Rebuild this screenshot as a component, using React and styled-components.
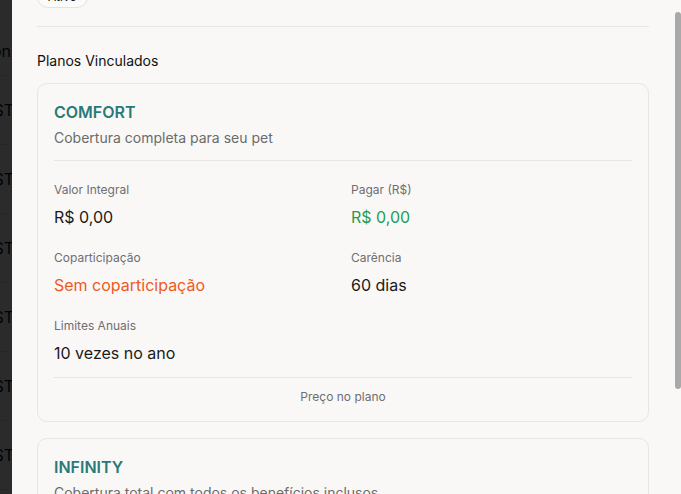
import { useEffect, useRef } from "react";
import styled, { createGlobalStyle } from "styled-components";

const Global = createGlobalStyle`
  html, body { margin: 0; padding: 0; height: 100%; }
  body {
    font-family: Inter, "Noto Sans", "Liberation Sans", sans-serif;
    background: #ffffff;
    color: #1a1a1a;
    overflow: hidden;
  }
`;

const Page = styled.div`
  height: 494px;
  overflow: hidden;
`;

const BgRow = styled.div`
  height: 68px;
  border-bottom: 1px solid #e6e6e6;
  display: flex;
  align-items: center;
  &:first-child { height: 75px; }
`;

const BgCell = styled.div`
  width: ${(p) => (p.$first ? "11px" : "14px")};
  overflow: hidden;
  direction: rtl;
  white-space: nowrap;
  font-size: 16px;
  color: #111;
  padding-top: ${(p) => (p.$first ? "26px" : "0")};
`;

const Overlay = styled.div`
  position: fixed;
  inset: 0;
  background: rgba(0, 0, 0, 0.83);
`;

const Drawer = styled.aside`
  position: fixed;
  top: 0;
  right: 0;
  bottom: 0;
  left: 12px;
  background: #f9f8f6;
`;

const Scroller = styled.div`
  height: 100%;
  overflow-y: auto;
  scrollbar-width: none;
  &::-webkit-scrollbar { display: none; }
`;

const ScrollThumb = styled.div`
  position: absolute;
  top: 12px;
  right: 0;
  width: 6px;
  height: 377px;
  border-radius: 3px;
  background: #a9a9a9;
`;

const Body = styled.div`
  padding: 1px 32px 24px 25px;
`;

const Badge = styled.span`
  display: inline-block;
  box-sizing: border-box;
  height: 22px;
  line-height: 20px;
  padding: 0 10px;
  border: 1px solid #e4e4e4;
  border-radius: 999px;
  background: #fbfbfa;
  font-size: 12px;
  color: #1a1a1a;
`;

const Rule = styled.hr`
  border: 0;
  height: 1px;
  background: #e5e5e3;
  margin: ${(p) => p.$margin || "18px 0 0"};
`;

const SectionTitle = styled.h3`
  margin: 24px 0 12px;
  font-size: 14px;
  line-height: 20px;
  font-weight: 400;
  color: #111;
`;

const CardList = styled.div`
  display: flex;
  flex-direction: column;
  gap: 16px;
`;

const Card = styled.section`
  border: 1px solid #e4e6e9;
  border-radius: 10px;
  padding: 16px;
  background: #f9f8f6;
`;

const PlanName = styled.h4`
  margin: 0;
  font-size: 16px;
  line-height: 24px;
  font-weight: 600;
  color: #277a78;
`;

const PlanDesc = styled.p`
  margin: 4px 0 0;
  font-size: 14px;
  line-height: 20px;
  color: #6b6b6b;
`;

const Fields = styled.div`
  display: grid;
  grid-template-columns: 1fr 1fr;
  row-gap: 21px;
  column-gap: 16px;
  padding: 21px 0 12px;
`;

const Field = styled.div`
  display: flex;
  flex-direction: column;
  gap: 7px;
`;

const Label = styled.span`
  font-size: 12px;
  line-height: 16px;
  color: #6e6e73;
`;

const tones = {
  default: "#1a1a1a",
  green: "#1e9e52",
  orange: "#ee5a24",
};

const Value = styled.span`
  font-size: 16px;
  line-height: 24px;
  color: ${(p) => tones[p.$tone || "default"]};
`;

const Footer = styled.div`
  border-top: 1px solid #e4e6e9;
  padding-top: 11px;
  text-align: center;
  font-size: 12px;
  line-height: 16px;
  color: #6e6e73;
`;

const plans = [
  {
    name: "COMFORT",
    desc: "Cobertura completa para seu pet",
    fields: [
      { label: "Valor Integral", value: "R$ 0,00" },
      { label: "Pagar (R$)", value: "R$ 0,00", tone: "green" },
      { label: "Coparticipação", value: "Sem coparticipação", tone: "orange" },
      { label: "Carência", value: "60 dias" },
      { label: "Limites Anuais", value: "10 vezes no ano" },
    ],
  },
  {
    name: "INFINITY",
    desc: "Cobertura total com todos os benefícios inclusos",
    fields: [
      { label: "Valor Integral", value: "R$ 0,00" },
      { label: "Pagar (R$)", value: "R$ 0,00", tone: "green" },
      { label: "Coparticipação", value: "Sem coparticipação", tone: "orange" },
      { label: "Carência", value: "30 dias" },
      { label: "Limites Anuais", value: "Ilimitado" },
    ],
  },
];

const bgRows = ["Opção", "TESTE ST", "TESTE ST", "TESTE ST", "TESTE ST", "TESTE ST", "TESTE ST", "TESTE ST"];

export default function App() {
  const scroller = useRef(null);

  useEffect(() => {
    if (scroller.current) scroller.current.scrollTop = 16;
  }, []);

  return (
    <Page>
      <Global />
      {bgRows.map((t, i) => (
        <BgRow key={i}>
          <BgCell $first={i === 0}>{i === 0 ? "on" : t}</BgCell>
        </BgRow>
      ))}
      <Overlay />
      <Drawer>
        <Scroller ref={scroller}>
          <Body>
            <Badge>Ativo</Badge>
            <Rule />
            <SectionTitle>Planos Vinculados</SectionTitle>
            <CardList>
              {plans.map((plan) => (
                <Card key={plan.name}>
                  <PlanName>{plan.name}</PlanName>
                  <PlanDesc>{plan.desc}</PlanDesc>
                  <Rule $margin="12px 0 0" />
                  <Fields>
                    {plan.fields.map((f) => (
                      <Field key={f.label}>
                        <Label>{f.label}</Label>
                        <Value $tone={f.tone}>{f.value}</Value>
                      </Field>
                    ))}
                  </Fields>
                  <Footer>Preço no plano</Footer>
                </Card>
              ))}
            </CardList>
          </Body>
        </Scroller>
        <ScrollThumb />
      </Drawer>
    </Page>
  );
}
